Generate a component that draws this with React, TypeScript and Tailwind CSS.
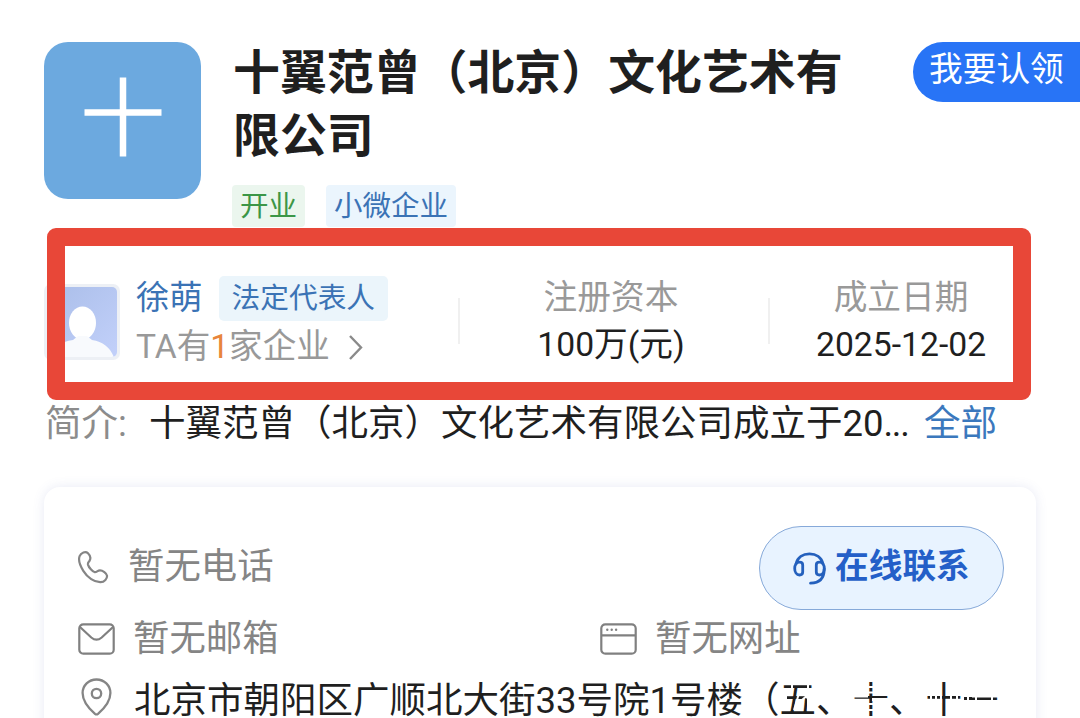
import type { ReactNode } from "react";

function PhoneIcon() {
  return (
    <svg className="h-[34px] w-[32px] shrink-0" viewBox="0 0 32 34" fill="none" stroke="#858585" strokeWidth="2.200" strokeLinecap="round" strokeLinejoin="round">
      <path d="M2.600 6.200C4 2.500 8.500 0.800 11 3.200C13.300 5.400 13.900 8.300 12.600 10.600C11.400 12.600 10.600 12.800 11 14.600C11.800 17.500 15.500 21.700 17.800 22.200C20 22.300 20.400 20.400 23 20.400C25.700 20.400 29.600 23.200 30 25.700C30.400 28.500 27.500 32 23.500 32.200C17.500 32.400 10.500 27.600 6.300 20.800C3.200 15.800 1.200 9.800 2.600 6.200Z" />
    </svg>
  );
}

function MailIcon() {
  return (
    <svg className="h-[32px] w-[37px] shrink-0" viewBox="0 0 37 32" fill="none" stroke="#808080" strokeWidth="2.200" strokeLinecap="round" strokeLinejoin="round">
      <rect x="1.300" y="1.300" width="34.400" height="29.400" rx="4" />
      <path d="M2.500 4.500L13.300 14.500Q18.500 18.900 23.700 14.500L34.500 4.500" />
    </svg>
  );
}

function PinIcon() {
  return (
    <svg className="h-[38px] w-[31px] shrink-0" viewBox="0 0 31 38" fill="none" stroke="#858585" strokeWidth="2.300" strokeLinejoin="round">
      <path d="M15.500 1.500C7.700 1.500 1.600 7.500 1.600 15C1.600 23.500 9 31.500 14 35.800Q15.500 37 17 35.800C22 31.500 29.400 23.500 29.400 15C29.400 7.500 23.300 1.500 15.500 1.500Z" />
      <circle cx="15.500" cy="15.500" r="4.700" />
    </svg>
  );
}

function BrowserIcon() {
  return (
    <svg className="h-[32px] w-[37px] shrink-0" viewBox="0 0 37 32" fill="none" stroke="#808080" strokeWidth="2.200">
      <rect x="1.300" y="1.300" width="34.400" height="29.400" rx="4" />
      <path d="M1.300 12.300H35.700" />
      <g fill="#808080" stroke="none">
        <circle cx="7.300" cy="6.800" r="1.200" />
        <circle cx="11.700" cy="6.800" r="1.200" />
        <circle cx="16.100" cy="6.800" r="1.200" />
      </g>
    </svg>
  );
}

function HeadsetIcon() {
  return (
    <svg className="h-[33px] w-[33px] shrink-0" viewBox="0 0 33 33" fill="none" stroke="#2460bd" strokeWidth="2.800" strokeLinecap="round" strokeLinejoin="round">
      <path d="M3 12C4.500 5.500 10 1.800 16.500 1.800S28.500 5.500 30 12" />
      <path d="M6.500 10.200Q9.700 10.200 9.700 13V20Q9.700 23 6.500 23C3.500 23 1.700 20 1.700 16.500S3.500 10.200 6.500 10.200Z" />
      <path d="M26.500 10.200Q23.300 10.200 23.300 13V20Q23.300 23 26.500 23C29.500 23 31.300 20 31.300 16.500S29.500 10.200 26.500 10.200Z" />
      <path d="M31.200 17C31.200 26.500 26 31 17.500 31.200" />
    </svg>
  );
}

function Avatar() {
  return (
    <svg className="h-[76px] w-[76px] shrink-0" viewBox="0 0 76 76">
      <defs>
        <linearGradient id="sky" x1="0" y1="0" x2="1" y2="1">
          <stop offset="0" stopColor="#a9bde8" />
          <stop offset="1" stopColor="#c3d1fb" />
        </linearGradient>
        <clipPath id="photo">
          <rect x="3" y="3" width="70" height="70" rx="5" />
        </clipPath>
      </defs>
      <rect width="76" height="76" rx="7" fill="#edf0f5" />
      <g clipPath="url(#photo)">
        <rect width="76" height="76" fill="url(#sky)" />
        <ellipse cx="38.500" cy="39" rx="13.500" ry="16.500" fill="#fff" />
        <path d="M4 76C6 64 16 58 29 56L34 52H43L48 56C60 58 67 64 71 76Z" fill="#f8fafd" />
      </g>
    </svg>
  );
}

function Figure({ label, children }: { label: string; children: ReactNode }) {
  return (
    <div className="flex flex-col items-center whitespace-nowrap text-[33.700px] leading-[48px]">
      <span className="text-[#999]">{label}</span>
      <span className="-mt-px text-[#1f1f1f]">{children}</span>
    </div>
  );
}

export default function App() {
  return (
    <main className="relative h-[718px] w-[1080px] overflow-hidden bg-white font-['Roboto','Noto_Sans_CJK_SC',sans-serif] text-[#1f1f1f]">
      <header className="flex h-[228px] items-start pt-[42px] pl-[44px]">
        <div className="flex size-[157px] shrink-0 items-center justify-center rounded-[24px] bg-[#6ca9df]">
          <svg className="size-[80px] -translate-y-[4px]" viewBox="0 0 80 80" stroke="#fff" strokeWidth="6.500">
            <path d="M40 0.500V79.500M1.500 35.500H78.500" />
          </svg>
        </div>
        <div className="-mt-px ml-[32px] w-[630px]">
          <h1 className="text-[46.900px] leading-[63px] font-bold">十翼范曾（北京）文化艺术有<br />限公司</h1>
          <div className="-ml-px mt-[18px] flex gap-[21px] text-[28.500px] leading-[43px]">
            <span className="h-[42px] rounded-[4px] bg-[#ebf6ee] px-2 text-[#3c9647]">开业</span>
            <span className="h-[42px] rounded-[4px] bg-[#ebf5fd] px-2 text-[#3b73b5]">小微企业</span>
          </div>
        </div>
        <button className="ml-auto h-[60px] w-[167px] rounded-l-full bg-[#2874f6] pl-[16px] text-left text-[33.700px] leading-[55px] whitespace-nowrap text-white"><span className="block h-[60px]">我要认领</span></button>
      </header>

      <section className="flex h-[172px] items-start pt-[44px] pl-[44px]">
        <div className="pt-[12px]"><Avatar /></div>
        <div className="ml-[16px] w-[322px]">
          <div className="flex items-center gap-[16px] pt-[3px]">
            <span className="text-[33.300px] leading-[46px] text-[#3b73b5]">徐萌</span>
            <span className="h-[45px] rounded-[5px] bg-[#ebf5fb] px-[13px] text-[28.700px] leading-[44px] text-[#3b73b5]">法定代表人</span>
          </div>
          <div className="flex items-center text-[33.600px] leading-[52px] text-[#999]">
            <span>TA有<span className="text-[#e8853c]">1</span>家企业</span>
            <svg className="ml-[19px] h-[25px] w-[14px]" viewBox="0 0 14 25" fill="none" stroke="#8a8a8a" strokeWidth="2.400"><path d="M1 1L12 12.500L1 24" /></svg>
          </div>
        </div>
        <div className="mt-[26px] h-[46px] w-[2px] bg-[#f0f0f0]" />
        <div className="flex w-[302px] justify-center pt-[2px]"><Figure label="注册资本">100万(元)</Figure></div>
        <div className="mt-[26px] ml-[6px] h-[46px] w-[2px] bg-[#f0f0f0]" />
        <div className="ml-[46px] pt-[2px]"><Figure label="成立日期">2025-12-02</Figure></div>
      </section>

      <p className="flex h-[87px] text-[36.500px] leading-[48px] whitespace-nowrap">
        <span className="ml-[45px] w-[104px] text-[#8c8c8c]">简介:</span>
        <span className="w-[775px]">十翼范曾（北京）文化艺术有限公司成立于20<span className="tracking-[-1.300px]">...</span></span>
        <a className="text-[#3b78bd]">全部</a>
      </p>

      <section className="ml-[44px] h-[260px] w-[992px] rounded-[16px] bg-white shadow-[0_0_12px_rgba(80,90,180,0.13)]">
        <div className="flex h-[116px] items-start pt-[39px] pl-[33px] text-[#858585]">
          <div className="flex h-[82px] items-center gap-[19px] text-[36.400px] leading-[78px]">
            <PhoneIcon />
            <span>暂无电话</span>
          </div>
          <button className="mr-[32px] ml-auto flex h-[84px] w-[245px] items-center gap-[9px] rounded-full border border-[#86a9d9] bg-[#e8f3ff] pl-[33px] text-[33.700px] font-bold whitespace-nowrap text-[#245fc8]">
            <HeadsetIcon />
            <span className="-mt-[2px]">在线联系</span>
          </button>
        </div>
        <div className="flex h-[72px] items-center pl-[34px] text-[36.400px] text-[#858585]">
          <MailIcon />
          <span className="ml-[18px] w-[467px]">暂无邮箱</span>
          <BrowserIcon />
          <span className="ml-[18px]">暂无网址</span>
        </div>
        <div className="flex h-[52px] items-start pl-[37px]">
          <div className="pt-[3px]"><PinIcon /></div>
          <span className="ml-[22px] h-[43px] text-[36.500px] leading-[52px] whitespace-nowrap">北京市朝阳区广顺北大街33号院1号楼（五、十、十一</span>
        </div>
      </section>

      <div className="pointer-events-none absolute top-[228px] left-[47px] h-[172px] w-[984px] rounded-[9px] border-[18px] border-[#e84738]" />
      <svg className="pointer-events-none absolute top-[678px] left-[780px] h-[40px] w-[270px]" viewBox="0 0 270 40" fill="none" stroke="#fff" strokeWidth="2">
        <path d="M12 4V12M20 12L14 32M28 5V32M32 13L26 20M6 17V22M22 22L30 15" />
        <path d="M84 9H98M84 14.500H98M84 26H98M84 32H98" />
        <path strokeWidth="3" d="M72 18H88M92 21.500H108M108 29L114 24" />
        <path d="M151 17V25M156 17V25M161 17V25M171 17V25M177 17V25M183 17V25M188 17V25M196 17V25M212 17V25M192 18.500H218" />
      </svg>
    </main>
  );
}
